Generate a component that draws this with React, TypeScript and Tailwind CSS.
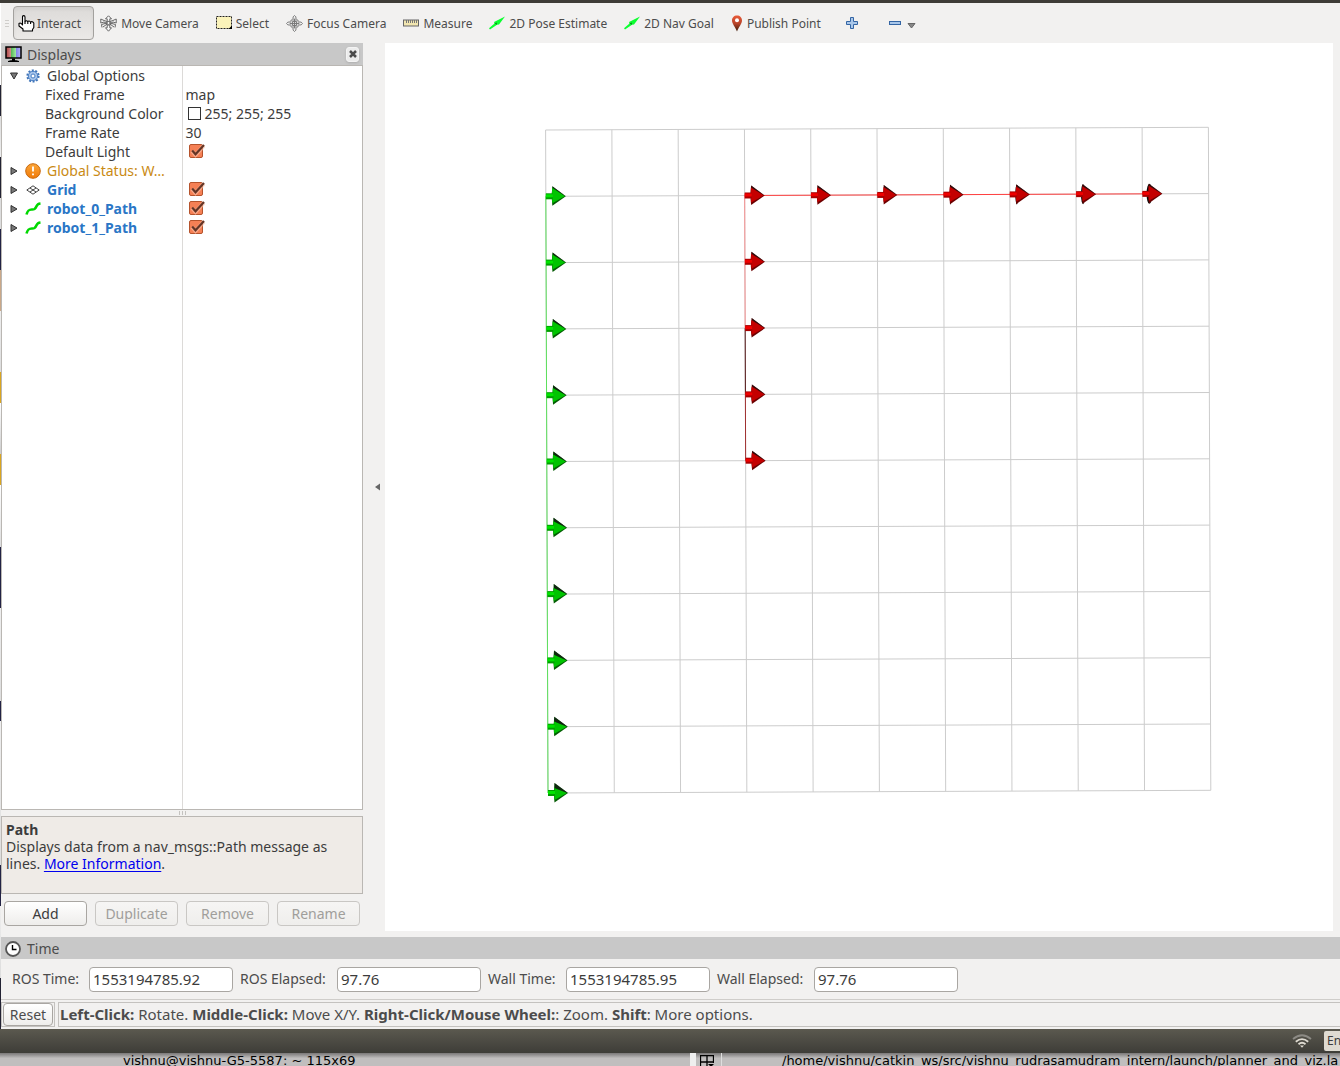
import type { ReactNode } from "react";

const HandIcon = () => (
  <svg width="17" height="17" viewBox="0 0 17 17" fill="white" stroke="black" strokeWidth="1.100" strokeLinejoin="round">
    <path d="M5 16 V14 L1 11 V8.500 Q2 7.500 3.200 8.500 L4.500 10 V2 Q4.500 .600 5.700 .600 Q7 .600 7 2 V6.500 Q8.500 5 9.700 6.500 Q11.200 5.300 12.500 7 Q14.500 6 15.800 8 V12.500 L14.500 14.500 V16 Z" />
    <path d="M7 6.500 V9 M9.800 6.500 V9 M12.600 7 V9" fill="none" />
  </svg>
);
const MoveIcon = () => (
  <svg width="17" height="17" viewBox="0 0 17 17" fill="#f8f8f8" stroke="#666" strokeWidth="1">
    <path d="M8.500 .800 L11.500 3.800 H9.800 V6.500 H7.200 V3.800 H5.500 Z" />
    <path d="M8.500 16.200 L11.500 12.800 H9.800 V10 H7.200 V12.800 H5.500 Z" />
    <path d="M.800 4 V8 L4 7 L7 8.500 V6.500 L4 5.500 Z M16.200 4 V8 L13 7 L10 8.500 V6.500 L13 5.500 Z" />
    <path d="M2 12.500 L1.500 9.500 L7 8 M15 12.500 L15.500 9.500 L10 8 M3 12 L8.500 8 L14 12" fill="none" />
    <circle cx="8.500" cy="8" r="1.600" />
  </svg>
);
const SelectIcon = () => (
  <svg width="16" height="14" viewBox="0 0 16 14">
    <rect x=".5" y=".5" width="15" height="12" fill="#fbf3ba" stroke="#222" strokeDasharray="2 1" />
    <path d="M16 9.500 V13 H12.500 Z" fill="black" />
  </svg>
);
const FocusIcon = () => (
  <svg width="17" height="17" viewBox="0 0 18 18" fill="none" stroke="#777" strokeWidth="1">
    <circle cx="9" cy="9" r="5" fill="#ddd" />
    <circle cx="9" cy="9" r="2.500" />
    <path d="M7.500 4 V2 L9 .500 L10.500 2 V4 M7.500 14 V16 L9 17.500 L10.500 16 V14 M4 7.500 H2 L.500 9 L2 10.500 H4 M14 7.500 H16 L17.500 9 L16 10.500 H14" fill="#eee" />
    <path d="M4 9 H14 M9 4 V14 M6 6.500 H12 M6 11.500 H12" />
  </svg>
);
const RulerIcon = () => (
  <svg width="16" height="8" viewBox="0 0 16 8">
    <rect x=".5" y="1" width="15" height="6" fill="#f2e6b0" stroke="#666" />
    <path d="M3.500 1 V4 M5.500 1 V4 M7.500 1 V4 M9.500 1 V4 M11.500 1 V4 M13.500 1 V4" stroke="#777" />
  </svg>
);
const PoseIcon = () => (
  <svg width="16" height="14" viewBox="0 0 16 14">
    <path d="M0 12.300 L5.500 7.500 L5 6 L16 .500 L10 8.500 L8 8.700 L1 13.500 Z" fill="#0bff2f" />
    <path d="M5.500 7.500 L8 8.700 L7.800 6.500 Z" fill="#0a8a1a" />
  </svg>
);
const PinIcon = () => (
  <svg width="12" height="17" viewBox="0 0 12 17">
    <defs>
      <linearGradient id="pin" x1="0" y1="0" x2="0" y2="1">
        <stop offset="0" stopColor="#ea5a38" />
        <stop offset=".5" stopColor="#b8442a" />
        <stop offset="1" stopColor="#3a1a08" />
      </linearGradient>
    </defs>
    <path d="M6 .500 C9 .500 11 2.600 11 5.500 C11 9 7.500 12 6 16.500 C4.500 12 1 9 1 5.500 C1 2.600 3 .500 6 .500 Z" fill="url(#pin)" />
    <circle cx="6" cy="5.300" r="2" fill="white" />
  </svg>
);
const PlusIcon = () => (
  <svg width="12" height="12" viewBox="0 0 12 12">
    <path d="M4.500 .500 H7.500 V4.500 H11.500 V7.500 H7.500 V11.500 H4.500 V7.500 H.500 V4.500 H4.500 Z" fill="#a9c7ea" stroke="#3465a4" />
  </svg>
);
const MinusIcon = () => (
  <svg width="12" height="5" viewBox="0 0 12 5">
    <rect x=".5" y=".5" width="11" height="3" fill="#a9c7ea" stroke="#3465a4" />
  </svg>
);
const MonitorIcon = () => (
  <svg width="17" height="17" viewBox="0 0 17 17">
    <defs>
      <linearGradient id="screen" x1="0" y1="0" x2="1" y2="0">
        <stop offset=".05" stopColor="#b04a4a" />
        <stop offset=".34" stopColor="#d89090" />
        <stop offset=".35" stopColor="#58b858" />
        <stop offset=".66" stopColor="#a0e8a0" />
        <stop offset=".67" stopColor="#8080e8" />
        <stop offset="1" stopColor="#b8b8f8" />
      </linearGradient>
    </defs>
    <rect x="1" y="1" width="15" height="11" fill="url(#screen)" stroke="black" strokeWidth="1.500" />
    <path d="M7 12.500 H10 V14.500 H7 Z M3 15 Q8.500 13 14 15 V16 H3 Z" fill="black" />
  </svg>
);
const GearIcon = () => (
  <svg width="14" height="14" viewBox="0 0 14 14">
    <circle cx="7" cy="7" r="5.600" fill="none" stroke="#3f74b8" strokeWidth="2" strokeDasharray="2 1.500" />
    <circle cx="7" cy="7" r="4.700" fill="#a6c4ea" stroke="#4a7fc4" />
    <circle cx="7" cy="7" r="2" fill="white" stroke="#4a7fc4" />
  </svg>
);
const WarnIcon = () => (
  <svg width="16" height="16" viewBox="0 0 16 16">
    <defs>
      <linearGradient id="warn" x1="0" y1="0" x2="0" y2="1">
        <stop offset="0" stopColor="#fba63a" />
        <stop offset="1" stopColor="#f07a08" />
      </linearGradient>
    </defs>
    <circle cx="8" cy="8" r="7.300" fill="url(#warn)" stroke="#c8690e" />
    <path d="M8 3.500 V8.500 M8 10.500 V12.300" stroke="white" strokeWidth="1.800" />
  </svg>
);
const GridIcon = () => (
  <svg width="14" height="10" viewBox="0 0 14 10" fill="none" stroke="#444">
    <path d="M7 .800 L13.200 5 L7 9.200 L.800 5 Z M4 3 L10 7 M10 3 L4 7" />
  </svg>
);
const PathIcon = () => (
  <svg width="16" height="14" viewBox="0 0 16 14" fill="none">
    <path d="M1.500 12.500 C3.500 5 7 8.500 9.500 7 C12.500 5 10.500 2 15.500 1.500" stroke="#00d800" strokeWidth="2.600" />
  </svg>
);
const ClockIcon = () => (
  <svg width="16" height="16" viewBox="0 0 16 16" fill="none">
    <circle cx="8" cy="8" r="7" fill="white" stroke="#555" strokeWidth="1.800" />
    <path d="M7.500 4 V8.500 H11.500" stroke="black" strokeWidth="1.400" />
  </svg>
);

const tools: { label: string; icon: ReactNode }[] = [
  { label: "Move Camera", icon: <MoveIcon /> },
  { label: "Select", icon: <SelectIcon /> },
  { label: "Focus Camera", icon: <FocusIcon /> },
  { label: "Measure", icon: <RulerIcon /> },
  { label: "2D Pose Estimate", icon: <PoseIcon /> },
  { label: "2D Nav Goal", icon: <PoseIcon /> },
  { label: "Publish Point", icon: <PinIcon /> },
];

function Toolbar() {
  return (
    <div className="flex h-10 items-center pl-1 text-xs text-[#4c4c4c]">
      <div className="flex w-2 flex-col gap-0.5">
        <span className="h-px w-1 bg-[#cfcdca]" />
        <span className="h-px w-1 bg-[#cfcdca]" />
        <span className="h-px w-1 bg-[#cfcdca]" />
      </div>
      <button className="flex h-[34px] items-center gap-0.5 rounded border border-[#a3a19e] bg-linear-to-b from-[#dcdad8] to-[#ebe9e7] pr-3 pl-1 shadow-inner">
        <HandIcon />
        <span className="pt-0.5">Interact</span>
      </button>
      <div className="flex items-center gap-[17px] pl-1.5">
        {tools.map((t) => (
          <button key={t.label} className="flex items-center gap-1 whitespace-nowrap">
            {t.icon}
            <span className="pt-px">{t.label}</span>
          </button>
        ))}
        <button aria-label="Add tool" className="ml-2">
          <PlusIcon />
        </button>
        <button aria-label="Remove tool" className="ml-3.5 flex items-center gap-1.5">
          <MinusIcon />
          <svg width="9" height="6" viewBox="0 0 9 6" className="mt-1.5">
            <path d="M1 .500 H8 L4.500 5 Z" fill="#888" stroke="#666" />
          </svg>
        </button>
      </div>
    </div>
  );
}

function Check({ label }: { label: string }) {
  return (
    <label className="relative mb-0.5 ml-[3px] flex h-4 w-4 items-center">
      <input
        type="checkbox"
        defaultChecked
        aria-label={label}
        className="peer h-3.5 w-3.5 appearance-none rounded-xs border border-[#b5532c] bg-white checked:bg-[#f58055]"
      />
      <svg width="16" height="16" viewBox="0 0 16 16" className="pointer-events-none absolute inset-0 hidden peer-checked:block" fill="none">
        <path d="M3 8 L6.500 12 L15 2.500" stroke="#fbc4ae" strokeWidth="4" opacity=".6" />
        <path d="M3.200 7.500 L6.500 11.300 L15 2" stroke="#643526" strokeWidth="2.200" />
      </svg>
    </label>
  );
}

type Row = { name: string; icon?: ReactNode; open?: boolean; tone?: "link" | "warn"; value?: ReactNode };

const rows: Row[] = [
  { name: "Global Options", icon: <GearIcon />, open: true },
  { name: "Fixed Frame", value: "map" },
  {
    name: "Background Color",
    value: (
      <span className="flex items-center gap-1">
        <span className="ml-0.5 h-[13px] w-[13px] border border-[#333] bg-white" />
        255; 255; 255
      </span>
    ),
  },
  { name: "Frame Rate", value: "30" },
  { name: "Default Light", value: <Check label="Default Light" /> },
  { name: "Global Status: W…", icon: <WarnIcon />, open: false, tone: "warn" },
  { name: "Grid", icon: <GridIcon />, open: false, tone: "link", value: <Check label="Grid" /> },
  { name: "robot_0_Path", icon: <PathIcon />, open: false, tone: "link", value: <Check label="robot_0_Path" /> },
  { name: "robot_1_Path", icon: <PathIcon />, open: false, tone: "link", value: <Check label="robot_1_Path" /> },
];

const tones = { link: "font-bold text-[#2a76c6]", warn: "text-[#c98a14]" };

function DisplayTree() {
  return (
    <div className="flex flex-1 border border-[#bab7b3] bg-white">
      <table className="h-full w-full table-fixed border-collapse text-[#3c3c3c]">
        <tbody>
          {rows.map((r) => (
            <tr key={r.name} className="h-[19px]">
              <td className="border-r border-[#dcdad8] p-0">
                {r.icon ? (
                  <div className="flex h-[19px] items-center">
                    <button aria-label={"Toggle " + r.name} className="flex w-[22px] justify-center pl-0.5">
                      <svg width="8" height="8" viewBox="0 0 8 8" fill="#777" stroke="#333">
                        {r.open ? <path d="M.500 1 H7.500 L4 7 Z" /> : <path d="M1 .500 V7.500 L7 4 Z" />}
                      </svg>
                    </button>
                    <span className="flex w-[18px] justify-center">{r.icon}</span>
                    <span className={"pl-[5px] whitespace-nowrap " + (r.tone ? tones[r.tone] : "")}>{r.name}</span>
                  </div>
                ) : (
                  <div className="flex h-[19px] items-center pl-[43px] whitespace-nowrap">{r.name}</div>
                )}
              </td>
              <td className="p-0">
                <div className="flex h-[19px] items-center pl-[3px]">{r.value}</div>
              </td>
            </tr>
          ))}
          <tr>
            <td className="border-r border-[#dcdad8] p-0" />
            <td className="p-0" />
          </tr>
        </tbody>
      </table>
    </div>
  );
}

const panelButton =
  "h-[25px] flex-1 rounded border border-[#a9a6a2] bg-linear-to-b from-white to-[#eeedeb] text-[#3c3c3c] disabled:border-[#c9c7c4] disabled:from-[#f6f5f4] disabled:to-[#efeeec] disabled:text-[#a09e9b]";

function DisplaysPanel() {
  return (
    <aside className="flex w-[362px] shrink-0 flex-col text-sm">
      <header className="flex h-[22px] items-center gap-[5px] bg-[#c8c8c8] px-1 text-[#4c4c4c]">
        <MonitorIcon />
        <h2 className="flex-1 pt-0.5">Displays</h2>
        <button aria-label="Close displays" className="flex h-[15px] w-[13px] items-center justify-center rounded-[3px] border border-[#f4f4f4] bg-[#ececec] shadow">
          <svg width="8" height="8" viewBox="0 0 8 8">
            <path d="M1 1 L7 7 M7 1 L1 7" stroke="#4c4c4c" strokeWidth="2.500" />
          </svg>
        </button>
      </header>
      <DisplayTree />
      <div className="flex h-1.5 items-center justify-center gap-0.5">
        <span className="h-1 w-px bg-[#c4c2bf]" />
        <span className="h-1 w-px bg-[#c4c2bf]" />
        <span className="h-1 w-px bg-[#c4c2bf]" />
      </div>
      <div className="h-[78px] border border-[#bab7b3] bg-[#efebe7] px-1 pt-1 leading-[17px] text-[#3c3c3c]">
        <p className="font-bold">Path</p>
        <p>
          Displays data from a nav_msgs::Path message as lines.{" "}
          <a href="#more" className="text-[#0000ee] underline underline-offset-2">More Information</a>.
        </p>
      </div>
      <div className="flex gap-2 px-[3px] pt-[7px] pb-[11px]">
        <button className={panelButton}>Add</button>
        <button disabled className={panelButton}>Duplicate</button>
        <button disabled className={panelButton}>Remove</button>
        <button disabled className={panelButton}>Rename</button>
      </div>
    </aside>
  );
}

const at = (i: number, j: number) => {
  const u = i / 10;
  const v = j / 10;
  return [545.6 + 662.8 * u + 2.4 * v, 130 - 2.7 * u + 663 * v];
};
const steps = Array.from({ length: 11 }, (_, k) => k);

type Paint = { shaft: string; under: string; cone: string; shade: string };
const green: Paint = { shaft: "#00e400", under: "#009c00", cone: "#00c400", shade: "#045c04" };
const red: Paint = { shaft: "#f00000", under: "#a80000", cone: "#c40000", shade: "#6c0000" };

/* lift: how much of the cone's dark upper flank shows; back: half-width of its base disc */
function Arrow({ x, y, paint, lift = 1, back = 0 }: { x: number; y: number; paint: Paint; lift?: number; back?: number }) {
  return (
    <g transform={`translate(${x} ${y})`}>
      {back > 0 && <ellipse cx="7" cy="0" rx={back} ry="10" fill="#0a0a0a" />}
      <path d="M6.500 -10 L20 0 L6.500 9.500 Q5 0 6.500 -10 Z" fill={paint.shade} />
      <path d={`M6.300 ${-9 + lift} L19 0 L6.500 7 Q5.500 0 6.300 ${-9 + lift} Z`} fill={paint.cone} />
      <path d={`M6.500 -10 L20 0 L6.800 ${-9 + lift} Z`} fill="#141414" opacity=".75" />
      <rect x="0" y="-3" width="7" height="6" fill={paint.under} />
      <rect x="0" y="-2" width="7" height="3" fill={paint.shaft} />
    </g>
  );
}

function Viewport() {
  const left = [1, 2, 3, 4, 5, 6, 7, 8, 9, 10].map((j) => at(0, j));
  const top = [3, 4, 5, 6, 7, 8, 9].map((i) => at(i, 1));
  const down = [2, 3, 4, 5].map((j) => at(3, j));
  const [a, b] = [top[0], top[6]];
  const c = down[3];
  return (
    <svg viewBox="385 43 948 888" preserveAspectRatio="xMidYMid meet" className="min-h-0 min-w-0 flex-1 bg-white" role="img" aria-label="Robot paths on a grid">
      <g stroke="#cccccc" strokeWidth="1">
        {steps.map((k) => {
          const [x1, y1] = at(k, 0);
          const [x2, y2] = at(k, 10);
          const [x3, y3] = at(0, k);
          const [x4, y4] = at(10, k);
          return (
            <g key={k}>
              <line x1={x1} y1={y1} x2={x2} y2={y2} />
              <line x1={x3} y1={y3} x2={x4} y2={y4} />
            </g>
          );
        })}
      </g>
      <line x1={left[0][0]} y1={left[0][1]} x2={left[9][0]} y2={left[9][1]} stroke="#5ce05c" />
      <line x1={a[0]} y1={a[1]} x2={b[0]} y2={b[1]} stroke="#ff4040" />
      <line x1={a[0]} y1={a[1]} x2={down[1][0]} y2={down[1][1]} stroke="#f79090" />
      <line x1={down[1][0]} y1={down[1][1]} x2={down[2][0]} y2={down[2][1]} stroke="#501010" />
      <line x1={down[2][0]} y1={down[2][1]} x2={c[0]} y2={c[1]} stroke="#a03030" />
      {left.map(([x, y], k) => <Arrow key={y} x={x} y={y} paint={green} lift={0.5 + k * 0.4} />)}
      {top.map(([x, y], k) => <Arrow key={x} x={x} y={y} paint={red} back={k > 2 ? (k - 2) * 0.7 : 0} />)}
      {down.map(([x, y]) => <Arrow key={y} x={x} y={y} paint={red} />)}
    </svg>
  );
}

const times = [
  { label: "ROS Time:", value: "1553194785.92", w: "w-[77px]" },
  { label: "ROS Elapsed:", value: "97.76", w: "w-[97px]" },
  { label: "Wall Time:", value: "1553194785.95", w: "w-[78px]" },
  { label: "Wall Elapsed:", value: "97.76", w: "w-[97px]" },
];

function TimePanel() {
  return (
    <section className="text-sm text-[#4c4c4c]">
      <header className="flex h-[22px] items-center gap-1.5 bg-[#c8c8c8] pt-px pl-1">
        <ClockIcon />
        <h2>Time</h2>
      </header>
      <div className="flex h-10 items-center gap-[7px] pl-[11px]">
        {times.map((t) => (
          <label key={t.label} className="flex items-center whitespace-nowrap">
            <span className={t.w}>{t.label}</span>
            <input
              readOnly
              defaultValue={t.value}
              className="h-[25px] w-36 rounded border border-[#a9a6a2] bg-white px-[3px] text-[15px] text-[#3c3c3c]"
            />
          </label>
        ))}
      </div>
    </section>
  );
}

function StatusBar() {
  return (
    <div className="flex h-[30px] gap-[3px] border-t border-[#cfcdca] pt-0.5 pb-0.5 text-sm text-[#4c4c4c]">
      <div className="flex items-center border border-[#c4c2bf] px-px">
        <button className="h-[23px] w-[50px] rounded border border-[#a9a6a2] bg-linear-to-b from-white to-[#eeedeb]">Reset</button>
      </div>
      <p className="flex-1 overflow-hidden border border-r-0 border-[#c4c2bf] pl-px text-[15px] leading-[23px] whitespace-nowrap">
        <b>Left-Click:</b> Rotate. <b>Middle-Click:</b> Move X/Y. <b>Right-Click/Mouse Wheel:</b>: Zoom. <b>Shift</b>: More options.
      </p>
    </div>
  );
}

function Desktop() {
  return (
    <footer>
      <div className="flex h-6 items-center justify-end gap-3 bg-linear-to-b from-[#5b594f] to-[#3e3d38]">
        <svg width="20" height="14" viewBox="0 0 20 14" fill="none" strokeWidth="1.800">
          <path d="M1 5 Q10 -2.500 19 5" stroke="#8c8a84" />
          <path d="M3.800 7.800 Q10 2.500 16.200 7.800" stroke="#dfdbd2" />
          <path d="M6.500 10.300 Q10 7.300 13.500 10.300" stroke="#dfdbd2" />
          <path d="M8 11.500 H12 L10 13.800 Z" fill="#dfdbd2" />
        </svg>
        <span className="h-5 w-4 overflow-hidden rounded-l-xs bg-[#dfdbd2] pl-[3px] text-xs leading-5 text-[#3c3c3c]">En</span>
      </div>
      <div className="flex h-[13px] overflow-hidden bg-linear-to-b from-[#7a7878] to-[#c0bebe] to-40% text-[13px] leading-[15px] text-black">
        <div className="w-[690px] shrink-0 pl-[123px] font-['DejaVu_Sans',sans-serif] whitespace-nowrap">vishnu@vishnu-G5-5587: ~ 115x69</div>
        <div className="w-1.5 shrink-0 bg-[#efefef]" />
        <div className="flex w-[26px] shrink-0 justify-center border-r border-[#dedede] pr-1">
          <svg width="14" height="13" viewBox="0 0 14 13" fill="none" stroke="black" className="mt-0.5">
            <path d="M.500 13 V.500 H13.500 V8 M7 .500 V13 M.500 7 H13.500" strokeWidth="1.300" />
            <path d="M8 9 H14 L11 12 Z" fill="black" stroke="none" />
          </svg>
        </div>
        <div className="min-w-0 flex-1 pl-[60px] font-['DejaVu_Sans',sans-serif] whitespace-nowrap">
          /home/vishnu/catkin_ws/src/vishnu_rudrasamudram_intern/launch/planner_and_viz.la
        </div>
      </div>
    </footer>
  );
}

export default function App() {
  return (
    <div className="flex h-screen flex-col overflow-hidden bg-[#f2f1f0] font-['Noto_Sans',sans-serif]">
      <div className="h-[3px] shrink-0 bg-[#3e3c37]" />
      <div className="flex min-h-0 flex-1">
        <div className="w-px shrink-0 bg-[linear-gradient(#fff_8%,#223_8%,#223_11%,#ddd_11%,#eee_15%,#223_15%,#223_19%,#ddd_19%,#ddd_22%,#224_22%,#224_26%,#caa888_26%,#caa888_30%,#eee_30%,#ddd_36%,#d9a520_36%,#d9a520_39%,#fff_39%,#ccc_44%,#d9a520_44%,#d9a520_47%,#fff_47%,#ddd_53%,#224_53%,#224_59%,#eee_59%,#ddd_68%,#224_68%,#224_70%,#eee_70%,#ddd_84%,#224_84%,#224_88%,#eee_88%,#ddd_95%,#223_95%)]" />
        <div className="flex min-w-0 flex-1 flex-col">
          <Toolbar />
          <main className="flex min-h-0 flex-1">
            <DisplaysPanel />
            <button aria-label="Collapse panel" className="mb-1.5 flex w-[22px] shrink-0 items-center justify-center pl-1.5">
              <svg width="7" height="8" viewBox="0 0 7 8">
                <path d="M6 .500 V7.500 L1 4 Z" fill="#666" />
              </svg>
            </button>
            <div className="flex min-w-0 flex-1 pr-[7px] pb-1.5">
              <Viewport />
            </div>
          </main>
          <TimePanel />
          <StatusBar />
        </div>
      </div>
      <Desktop />
    </div>
  );
}
